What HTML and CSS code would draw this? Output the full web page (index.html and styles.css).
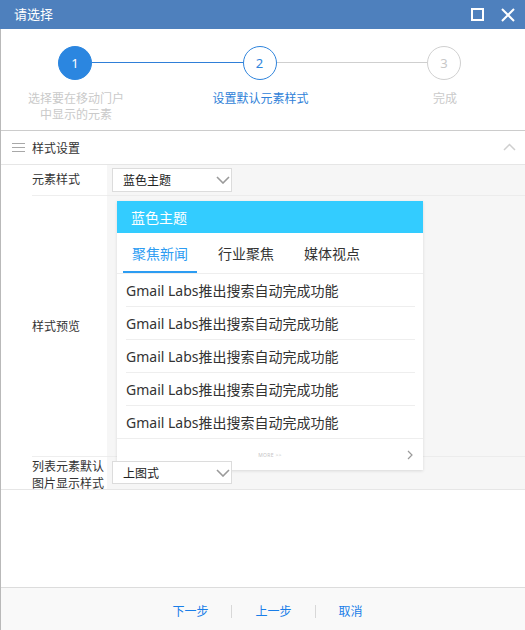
FILE: index.html
```html
<!DOCTYPE html>
<html lang="zh">
<head>
<meta charset="utf-8">
<title>请选择</title>
<link rel="stylesheet" href="styles.css">
</head>
<body>
<div class="dialog">
  <header class="titlebar">
    <span class="title">请选择</span>
    <span class="tools">
      <svg class="tool" width="14" height="14" viewBox="0 0 14 14"><rect x="1" y="1" width="11" height="11" fill="none" stroke="#fff" stroke-width="2"/></svg>
      <svg class="tool" width="14" height="14" viewBox="0 0 14 14"><path d="M1 1 L13 13 M13 1 L1 13" stroke="#fff" stroke-width="2" fill="none"/></svg>
    </span>
  </header>
  <div class="body">
    <div class="steps">
      <div class="step done">
        <div class="circle">1</div>
        <div class="step-label">选择要在移动门户中显示的元素</div>
      </div>
      <div class="conn conn-active"></div>
      <div class="step current">
        <div class="circle">2</div>
        <div class="step-label">设置默认元素样式</div>
      </div>
      <div class="conn"></div>
      <div class="step todo">
        <div class="circle">3</div>
        <div class="step-label">完成</div>
      </div>
    </div>

    <div class="panel-head">
      <svg class="menu-icon" width="13" height="10" viewBox="0 0 13 10"><path d="M0 0.5H13M0 4.5H13M0 8.5H13" stroke="#a8a8a8" stroke-width="1"/></svg>
      <span class="panel-title">样式设置</span>
      <svg class="caret-up" width="13" height="8" viewBox="0 0 13 8"><path d="M1 7 L6.5 1.5 L12 7" stroke="#cfcfcf" stroke-width="1.5" fill="none"/></svg>
    </div>

    <div class="form">
      <div class="row row-1">
        <div class="lab">元素样式</div>
        <div class="cell">
          <div class="select">
            <span>蓝色主题</span>
            <svg class="chev" width="14" height="8" viewBox="0 0 14 8"><path d="M1 1 L7 7 L13 1" stroke="#9a9a9a" stroke-width="1.6" fill="none"/></svg>
          </div>
        </div>
      </div>
      <div class="row row-2">
        <div class="lab">样式预览</div>
        <div class="cell">
          <div class="card">
            <div class="card-head">蓝色主题</div>
            <div class="tabs">
              <div class="tab active"><span>聚焦新闻</span></div>
              <div class="tab"><span>行业聚焦</span></div>
              <div class="tab"><span>媒体视点</span></div>
            </div>
            <ul class="news">
              <li>Gmail Labs推出搜索自动完成功能</li>
              <li>Gmail Labs推出搜索自动完成功能</li>
              <li>Gmail Labs推出搜索自动完成功能</li>
              <li>Gmail Labs推出搜索自动完成功能</li>
              <li>Gmail Labs推出搜索自动完成功能</li>
            </ul>
            <div class="card-foot">
              <span class="more">MORE &gt;&gt;</span>
              <svg class="more-arrow" width="6" height="10" viewBox="0 0 6 10"><path d="M1 1 L5 5 L1 9" stroke="#9a9a9a" stroke-width="1.2" fill="none"/></svg>
            </div>
          </div>
        </div>
      </div>
      <div class="row row-3">
        <div class="lab">列表元素默认图片显示样式</div>
        <div class="cell">
          <div class="select select-over">
            <span>上图式</span>
            <svg class="chev" width="14" height="8" viewBox="0 0 14 8"><path d="M1 1 L7 7 L13 1" stroke="#9a9a9a" stroke-width="1.6" fill="none"/></svg>
          </div>
        </div>
      </div>
    </div>

    <div class="spacer"></div>

    <footer class="footer">
      <a class="btn">下一步</a>
      <span class="sep"></span>
      <a class="btn">上一步</a>
      <span class="sep"></span>
      <a class="btn">取消</a>
    </footer>
  </div>
</div>
</body>
</html>
```

FILE: styles.css
```css
* { box-sizing: border-box; }
html, body { margin: 0; padding: 0; background: #fff; }
body {
  font-family: "Noto Sans", "Noto Sans CJK SC", sans-serif;
  font-size: 12px;
  color: #333;
}
.dialog {
  width: 525px;
  height: 630px;
  display: flex;
  flex-direction: column;
}
.titlebar {
  height: 29px;
  flex: none;
  background: #4e80bd;
  display: flex;
  align-items: center;
  padding: 0 10px 0 14px;
}
.title {
  color: #fff;
  font-size: 13px;
  flex: 1;
  line-height: 29px;
}
.tools { display: flex; gap: 16px; align-items: center; padding-top: 1px; }
.tool { display: block; }

.body {
  flex: 1;
  display: flex;
  flex-direction: column;
  border-left: 1px solid #b9b9b9;
}

/* steps */
.steps {
  height: 101px;
  flex: none;
  display: flex;
  padding: 17px 31px 0 24px;
}
.step {
  width: 100px;
  flex: none;
  display: flex;
  flex-direction: column;
  align-items: center;
}
.circle {
  width: 34px;
  height: 34px;
  border-radius: 50%;
  display: flex;
  align-items: center;
  justify-content: center;
  font-size: 13px;
  background: #fff;
  border: 1px solid #d0d0d0;
  color: #c8c8c8;
}
.done .circle { background: #2b86e0; border-color: #2b86e0; color: #fff; }
.current .circle { border-color: #2f84dc; color: #2f84dc; }
.step-label {
  margin-top: 11px;
  width: 100px;
  text-align: center;
  line-height: 16px;
  color: #cacaca;
  padding-left: 2px;
}
.current .step-label { color: #2f7fd8; }
.conn {
  flex: 1;
  height: 1px;
  margin: 16px -33px 0;
  background: #cfcfcf;
}
.conn-active { background: #2f7fd8; }

/* panel head */
.panel-head {
  flex: none;
  height: 35px;
  border-top: 1px solid #cccccc;
  border-bottom: 1px solid #e6e6e6;
  display: flex;
  align-items: center;
  padding: 0 9px 0 11px;
}
.menu-icon { display: block; margin-right: 7px; }
.panel-title { flex: 1; color: #333; }
.caret-up { display: block; margin-top: -2px; }

/* form */
.form { flex: none; }
.row {
  display: flex;
}
.lab {
  margin-left: 31px;
  width: 75px;
  flex: none;
  display: flex;
  align-items: center;
  line-height: 17px;
  border-bottom: 1px solid #eeeeee;
  color: #333;
}
.cell {
  flex: 1;
  background: #f6f6f6;
  border-bottom: 1px solid #ececec;
  padding-left: 5px;
}
.row-1 { height: 31px; }
.row-1 .lab { padding-bottom: 2px; }
.row-1 .cell { padding-top: 3px; }
.row-2 { height: 261px; }
.row-2 .cell { padding: 5px 0 0 10px; }
.row-3 { height: 33px; border-bottom: 1px solid #e6e6e6; }
.row-3 .lab, .row-3 .cell { border-bottom: none; }
.row-3 .lab { padding-top: 3px; }
.row-3 .cell { padding-top: 4px; }

.select {
  width: 120px;
  height: 24px;
  background: #fff;
  border: 1px solid #dcdcdc;
  display: flex;
  align-items: center;
  padding: 0 1px 0 10px;
  color: #222;
}
.select span { flex: 1; }
.chev { display: block; }
.select-over { position: relative; z-index: 2; height: 23px; }

/* preview card */
.card {
  position: relative;
  z-index: 1;
  width: 306px;
  height: 269px;
  background: #fff;
  box-shadow: 0 1px 3px rgba(0,0,0,0.12);
  display: flex;
  flex-direction: column;
}
.card-head {
  height: 32px;
  background: #33ccff;
  color: #fff;
  font-size: 14px;
  display: flex;
  align-items: center;
  padding-left: 14px;
}
.tabs {
  height: 41px;
  display: flex;
  border-bottom: 1px solid #eeeeee;
}
.tab {
  width: 86px;
  padding: 0 6px;
  font-size: 14px;
  color: #333;
}
.tab span {
  display: flex;
  height: 40px;
  align-items: center;
  justify-content: center;
}
.tab.active span {
  color: #2c9cf2;
  border-bottom: 2px solid #2c9cf2;
  padding-top: 2px;
}
.news {
  list-style: none;
  margin: 0;
  padding: 0;
}
.news li {
  height: 33px;
  margin: 0 8px 0 9px;
  border-bottom: 1px solid #eeeeee;
  font-size: 14px;
  color: #333;
  display: flex;
  align-items: center;
  padding-bottom: 1px;
}
.news li:last-child { border-bottom: none; height: 32px; }
.card-foot {
  height: 32px;
  border-top: 1px solid #eeeeee;
  display: flex;
  align-items: center;
  padding: 0 10px 0 0;
}
.more {
  flex: 1;
  text-align: center;
  font-size: 5px;
  color: #c4c4c4;
  letter-spacing: 0.3px;
  padding-left: 16px;
}
.more-arrow { display: block; }

.spacer { flex: 1; }

.footer {
  flex: none;
  height: 43px;
  border-top: 1px solid #dcdcdc;
  background: #f9f9f9;
  display: flex;
  align-items: center;
  justify-content: center;
  padding: 4px 0 0 9px;
  gap: 23px;
}
.btn {
  color: #1a7ee8;
  font-size: 12px;
  cursor: pointer;
}
.sep {
  width: 1px;
  height: 13px;
  background: #d8d8d8;
}
```
